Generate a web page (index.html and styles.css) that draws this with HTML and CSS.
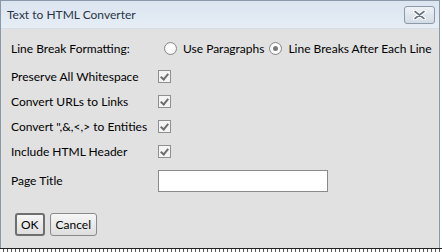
FILE: index.html
```html
<!DOCTYPE html>
<html lang="en">
<head>
    <meta charset="UTF-8">
    <title>Text to HTML Converter</title>
    <link rel="stylesheet" href="styles.css">
</head>
<body>

    <div class="dialog">
        <div class="title-bar">
            <span class="title">Text to HTML Converter</span>
            <button class="close-btn">
                <svg width="13" height="10" viewBox="0 0 13 10">
                    <path d="M2 1.5 L11 8.5 M11 1.5 L2 8.5" stroke="#ffffff" stroke-width="4" stroke-linecap="round"/>
                    <path d="M2 1.5 L11 8.5 M11 1.5 L2 8.5" stroke="#6b7480" stroke-width="1.6" stroke-linecap="round"/>
                </svg>
            </button>
        </div>

        <div class="dialog-body">
            <div class="row row-first">
                <span class="label">Line Break Formatting:</span>
                <div class="radios">
                    <label class="radio-item"><span class="radio"></span>Use Paragraphs</label>
                    <label class="radio-item"><span class="radio checked"></span>Line Breaks After Each Line</label>
                </div>
            </div>

            <div class="row">
                <span class="label">Preserve All Whitespace</span>
                <span class="check"></span>
            </div>
            <div class="row">
                <span class="label">Convert URLs to Links</span>
                <span class="check"></span>
            </div>
            <div class="row">
                <span class="label">Convert ",&amp;,&lt;,&gt; to Entities</span>
                <span class="check"></span>
            </div>
            <div class="row">
                <span class="label">Include HTML Header</span>
                <span class="check"></span>
            </div>
            <div class="row row-title">
                <span class="label">Page Title</span>
                <input type="text" class="title-input">
            </div>

            <div class="buttons">
                <button class="btn btn-default">OK</button>
                <button class="btn">Cancel</button>
            </div>
        </div>
    </div>
    <div class="taskbar-edge"></div>

</body>
</html>
```

FILE: styles.css
```css
body {
    margin: 0;
    background-color: #ffffff;
    font-family: Lato, "Noto Sans", sans-serif;
    font-size: 12px;
    color: #000000;
}

.dialog {
    width: 438px;
    height: 247px;
    border: 1px solid #8a98a8;
    border-bottom: none;
    background-color: #e1e1e1;
}

.title-bar {
    height: 27px;
    display: flex;
    align-items: center;
    justify-content: space-between;
    padding-left: 6px;
    padding-right: 4px;
    background: linear-gradient(to bottom, #dbe5f0, #e6edf5);
    border-bottom: 1px solid #d6dde6;
}

.title {
    color: #2a3444;
}

.close-btn {
    width: 31px;
    height: 18px;
    padding: 0;
    border: 1px solid #8c99a8;
    border-radius: 3px;
    background: linear-gradient(to bottom, #eef2f7, #d3dce6);
    display: flex;
    align-items: center;
    justify-content: center;
}

.dialog-body {
    padding-left: 10px;
    white-space: nowrap;
}

.row {
    display: flex;
    align-items: center;
    height: 25px;
}

.row-first {
    height: 30px;
    margin-top: 4px;
    margin-bottom: 1px;
}

.label {
    width: 147px;
    flex-shrink: 0;
}

.radios {
    display: flex;
    gap: 5px;
    margin-left: 6px;
}

.radio-item {
    display: flex;
    align-items: center;
}

.radio {
    width: 11px;
    height: 11px;
    border: 1px solid #8a8a8a;
    border-radius: 50%;
    background: radial-gradient(circle, #ffffff 40%, #e6e6e6);
    margin-right: 6px;
    position: relative;
}

.radio.checked::after {
    content: "";
    position: absolute;
    left: 3px;
    top: 3px;
    width: 5px;
    height: 5px;
    border-radius: 50%;
    background-color: #7a7a7a;
}

.check {
    width: 11px;
    height: 11px;
    border: 1px solid #8f8f8f;
    background-color: #f4f4f4;
    position: relative;
}

.check::after {
    content: "";
    position: absolute;
    left: 3px;
    top: 1px;
    width: 3px;
    height: 6px;
    border-right: 2px solid #6e6e6e;
    border-bottom: 2px solid #6e6e6e;
    transform: rotate(40deg);
}

.row-title {
    height: 31px;
    margin-top: 1px;
}

.title-input {
    width: 168px;
    height: 20px;
    padding: 0;
    border: 1px solid #8a8a8a;
    background-color: #ffffff;
    margin: 0;
}

.buttons {
    display: flex;
    gap: 5px;
    margin-top: 17px;
    margin-left: 4px;
}

.btn {
    height: 23px;
    padding: 0 5px;
    font-family: Lato, "Noto Sans", sans-serif;
    font-size: 12px;
    color: #000000;
    border: 1px solid #8a8a8a;
    border-radius: 3px;
    background: linear-gradient(to bottom, #f6f6f6, #dedede);
}

.btn-default {
    border: 2px solid #6f6f6f;
    padding: 0 4px;
}

.taskbar-edge {
    height: 4px;
    width: 442px;
    border-top: 1px solid #222222;
    background: repeating-linear-gradient(to right, #ffffff 0, #ffffff 3px, #555555 3px, #555555 4px);
}
```
